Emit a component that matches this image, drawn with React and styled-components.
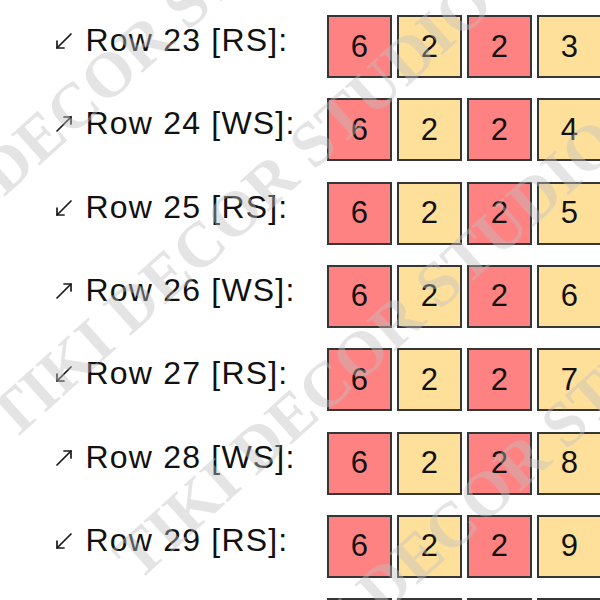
import React from "react";
import styled, { createGlobalStyle } from "styled-components";

const Global = createGlobalStyle`
  html, body { margin: 0; padding: 0; background: #ffffff; }
  body { font-family: "Liberation Sans", Arial, sans-serif; color: #111; }
`;

const Page = styled.div`
  position: relative;
  width: 600px;
  height: 600px;
  overflow: hidden;
  background: #fff;
`;

const Rows = styled.div`
  display: flex;
  flex-direction: column;
  gap: 20.33px;
  padding: 15px 0 0 55px;
`;

const Row = styled.div`
  display: grid;
  grid-template-columns: 272px auto;
  align-items: start;
`;

const Label = styled.div`
  display: flex;
  align-items: flex-start;
  gap: 12.5px;
  padding-top: 7px;
`;

const ArrowIcon = styled.svg`
  width: 18px;
  height: 18px;
  margin-top: 10px;
  flex: none;
`;

const LabelText = styled.span`
  font-size: 32px;
  line-height: 36px;
  letter-spacing: 1.2px;
  white-space: nowrap;
  color: #111;
`;

const Cells = styled.div`
  display: flex;
  gap: 5px;
`;

const Cell = styled.div`
  box-sizing: border-box;
  width: 65px;
  height: 63px;
  flex: none;
  border: 2px solid #363636;
  background: ${(p) => (p.$tone === "red" ? "#ff8282" : "#ffe09b")};
  display: flex;
  align-items: center;
  justify-content: center;
  font-size: 31px;
  letter-spacing: 0.5px;
  color: #111;
`;

const Watermark = styled.div`
  position: absolute;
  inset: 0;
  pointer-events: none;
  overflow: hidden;
`;

const WatermarkText = styled.span`
  position: absolute;
  transform: translate(-50%, -50%) rotate(-42deg);
  font-family: "Liberation Serif", "Times New Roman", serif;
  font-weight: 700;
  font-size: 64px;
  line-height: 1;
  white-space: nowrap;
  color: rgba(190, 190, 190, 0.42);
`;

function Arrow({ dir }) {
  return (
    <ArrowIcon viewBox="0 0 18 18" fill="none" stroke="#1a1a1a" strokeWidth="1.7" strokeLinecap="round" strokeLinejoin="round">
      {dir === "down" ? (
        <>
          <path d="M16 2 L2 16" />
          <path d="M2 9 L2 16 L9 16" />
        </>
      ) : (
        <>
          <path d="M2 16 L16 2" />
          <path d="M9 2 L16 2 L16 9" />
        </>
      )}
    </ArrowIcon>
  );
}

const rows = [23, 24, 25, 26, 27, 28, 29, 30].map((n) => ({
  n,
  side: n % 2 === 1 ? "RS" : "WS",
  cells: [6, 2, 2, n - 20],
}));

const tones = ["red", "yellow", "red", "yellow"];

const marks = [
  { x: 114, y: 70 },
  { x: 240, y: 209 },
  { x: 366, y: 349 },
  { x: 492, y: 489 },
];

export default function App() {
  return (
    <>
      <Global />
      <Page>
        <Rows>
          {rows.map((r) => (
            <Row key={r.n}>
              <Label>
                <Arrow dir={r.side === "RS" ? "down" : "up"} />
                <LabelText>{`Row ${r.n} [${r.side}]:`}</LabelText>
              </Label>
              <Cells>
                {r.cells.map((v, i) => (
                  <Cell key={i} $tone={tones[i]}>{v}</Cell>
                ))}
              </Cells>
            </Row>
          ))}
        </Rows>
        <Watermark>
          {marks.map((m, i) => (
            <WatermarkText key={i} style={{ left: m.x, top: m.y }}>
              TIKI DECOR STUDIO
            </WatermarkText>
          ))}
        </Watermark>
      </Page>
    </>
  );
}
